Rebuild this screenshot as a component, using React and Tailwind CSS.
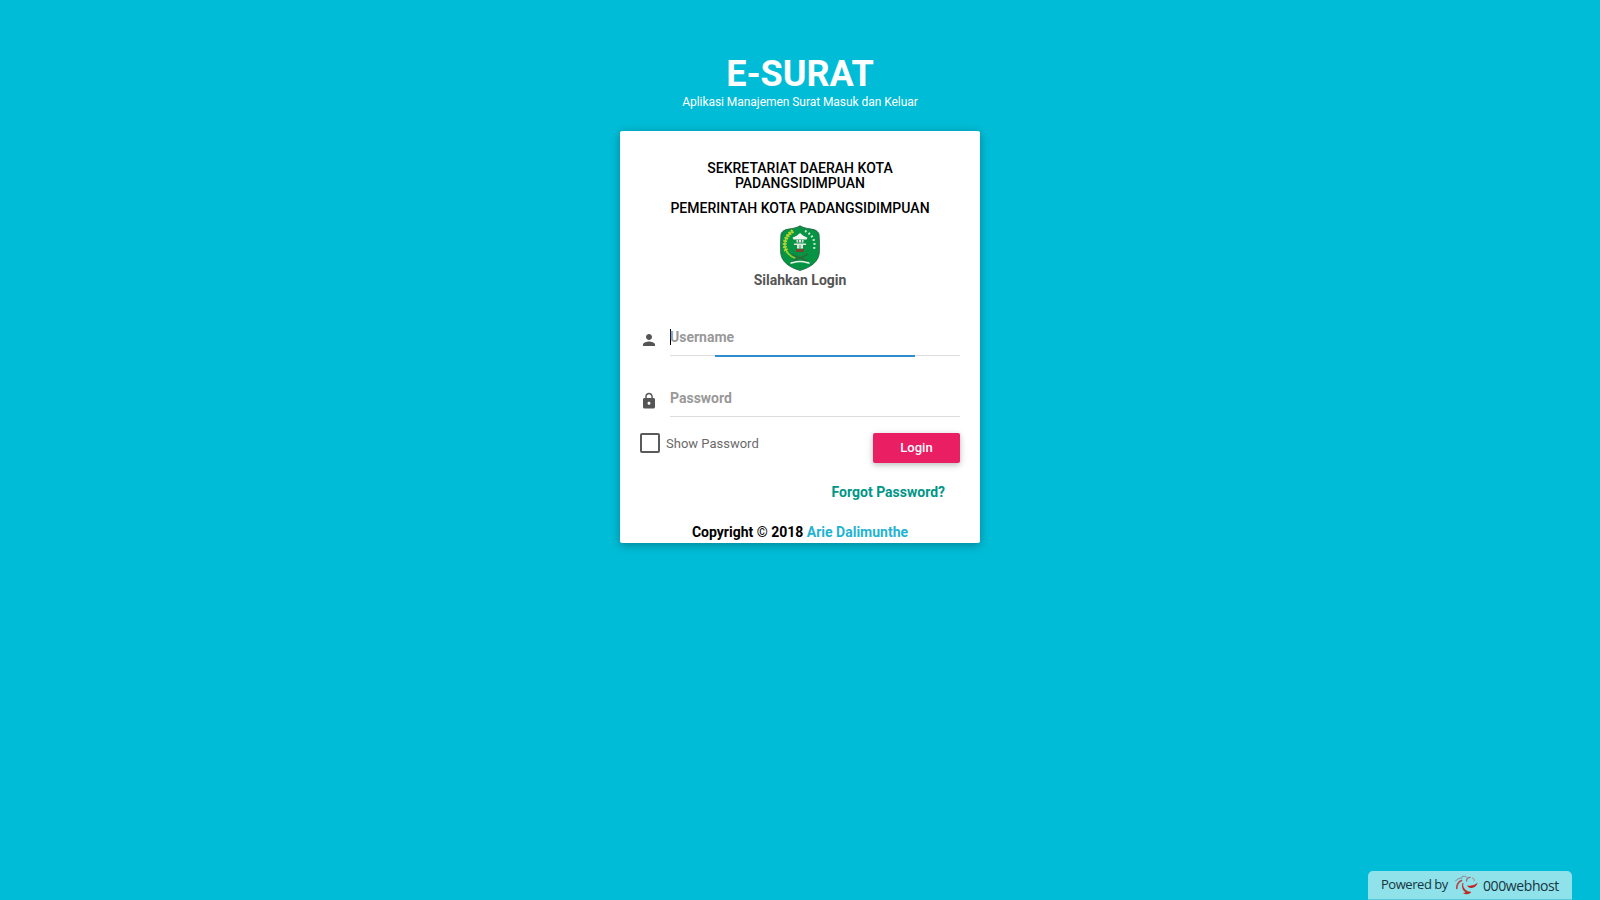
function Crest() {
  return (
    <svg className="h-[46px] w-[42px]" viewBox="0 0 42 46">
      <path d="M21 .8C24.500 3.200 30 3.600 35 4.600c2.500 1 4.200 2.400 5 4.400.5 6 .6 12 .3 19C39.500 36.500 32 42.500 21 45.400 10 42.500 2.500 36.500 1.700 28 1.400 21 1.500 15 2 9c.8-2 2.500-3.400 5-4.400C12 3.600 17.500 3.200 21 .8Z" fill="#079344" stroke="#24613f" strokeWidth=".8" />
      <path d="M14 6C6 11 3.500 20 8 27c2 3 5 5 8 6" fill="none" stroke="#9fcf2c" strokeWidth="1.600" />
      <path d="M14 6C6 11 3.500 20 8 27" fill="none" stroke="#b4d431" strokeWidth="4" strokeDasharray="1.800 1.200" />
      <path d="M26 6c7 3 11 10 9 18" fill="none" stroke="#d9f0de" strokeWidth="2.200" strokeDasharray="1.700 2.300" />
      <path d="m21 8 3 2.500 4.500 2.300-1 1.700h-13l-1-1.700L18 10.500Z" fill="#f3f7f2" />
      <path d="M17.500 15h7v2.500h-7zM15 18.500h12v1.600H15zM18 20h6v3.500h-6z" fill="#dce9dc" />
      <path d="M19.500 15v2.500m3-2.500v2.500M21 20v3.500" stroke="#286743" strokeWidth=".8" />
      <path d="M17 24h8v3h-8z" fill="#75472f" />
      <path d="M13 29c4 3 10 4 15 7M29 29c-4 3-10 4-15 7" stroke="#2d6b39" strokeWidth="1.500" fill="none" />
      <path d="M11.500 38.300c3-.8 5-1.800 9.500-1.800s6.500 1 9.500 1.800" stroke="#e8f3e8" strokeWidth="1.700" fill="none" />
    </svg>
  );
}

function HostLogo() {
  return (
    <svg className="h-5 w-6 shrink-0" viewBox="0 0 24 20">
      <path d="M9 8c-.6 3 .5 5.600 3 7.400 1.400 1 3 1.600 5 1.600-1.500 2-4.800 2.600-7.400 1.200 1-.1 1.800-.4 2.400-.8C9 15.500 7.400 12 9 8Z" fill="#c5221c" stroke="#c5221c" strokeWidth=".5" />
      <path d="M13 10.500c3.500.8 7.500-.1 10.700-3-.8 3.700-3.700 5.600-6.700 5.400-1.800-.1-3.200-1-4-2.400Z" fill="#c5221c" />
      <g fill="none" strokeLinecap="round">
        <path d="M7.500 5.500C4.500 7 2.600 10 2.800 13.500" stroke="#bb4545" strokeWidth="1.600" />
        <path d="M8 3C5.500 2.800 3 4 1.500 6" stroke="#8b7f89" strokeWidth="1" />
        <path d="M12.500 2C11 1 9.500 1 8 1.600" stroke="#8b7f89" strokeWidth=".9" />
        <path d="M12.500 6c0-2.200 1.400-3.700 3.800-3.700" stroke="#99727a" strokeWidth="1.300" />
        <path d="M18.500 3c1.500.6 2 1.600 1.700 2.800" stroke="#bd7777" strokeWidth="1" />
      </g>
    </svg>
  );
}

function Field({ label, icon, focused = false }) {
  return (
    <div className="flex h-[41px]">
      <div className="flex w-[30px] shrink-0 pt-[10px]">
        <svg className="size-[18px]" viewBox="0 0 24 24" fill="#555">
          <path d={icon} />
        </svg>
      </div>
      <div className="flex h-9 flex-1 flex-col">
        <div className="flex h-[35px] shrink-0 items-center border-b border-[#ddd] pb-[3px]">
          {focused && <span className="-mr-px h-4 w-px bg-black" />}
          <span className="text-[14px] font-bold leading-5 text-[#999]">{label}</span>
        </div>
        {focused && <div className="-mt-px ml-[44.500px] h-0.5 w-[200px] shrink-0 bg-[#2f8dcd]" />}
      </div>
    </div>
  );
}

const person = "M12 12c2.210 0 4-1.790 4-4s-1.790-4-4-4-4 1.790-4 4 1.790 4 4 4zm0 2c-2.670 0-8 1.340-8 4v2h16v-2c0-2.660-5.330-4-8-4z";
const lock = "M18 8h-1V6c0-2.760-2.240-5-5-5S7 3.240 7 6v2H6c-1.100 0-2 .9-2 2v10c0 1.100.9 2 2 2h12c1.100 0 2-.9 2-2V10c0-1.100-.9-2-2-2zm-6 9c-1.100 0-2-.9-2-2s.9-2 2-2 2 .9 2 2-.9 2-2 2zm3.100-9H8.900V6c0-1.710 1.390-3.100 3.100-3.100s3.100 1.390 3.100 3.100v2z";

export default function App() {
  return (
    <div className="flex h-screen flex-col items-center overflow-hidden bg-[#00bcd6] font-[Roboto,sans-serif] text-[14px]">
      <header className="h-[131px] shrink-0 pt-[49px] text-center text-white">
        <h1 className="text-[36px] font-bold leading-[51px]">E-SURAT</h1>
        <p className="-mt-[6px] text-[12px] leading-[17px] tracking-[-0.05px]">Aplikasi Manajemen Surat Masuk dan Keluar</p>
      </header>
      <main className="flex h-[412px] w-[360px] shrink-0 flex-col rounded-[2px] bg-white px-5 pt-[30px] shadow-[0_2px_10px_rgba(0,0,0,0.3)]">
        <div className="flex flex-col items-center text-center font-medium leading-[15px] text-black">
          <p className="w-[300px] tracking-[0.02px]">SEKRETARIAT DAERAH KOTA PADANGSIDIMPUAN</p>
          <p className="mt-[10px] tracking-[0.02px]">PEMERINTAH KOTA PADANGSIDIMPUAN</p>
          <div className="mt-[9px]"><Crest /></div>
          <p className="-mt-px leading-5 font-bold text-[#555]">Silahkan Login</p>
        </div>
        <div className="mt-[31px]"><Field label="Username" icon={person} focused /></div>
        <div className="mt-5"><Field label="Password" icon={lock} /></div>
        <div className="mt-[10px] flex h-[30px] justify-between">
          <div className="flex h-5 items-center gap-[6px]">
            <span className="size-5 rounded-[2px] border-2 border-[#5a5a5a]" />
            <span className="pt-0.5 text-[13px] leading-5 text-[#6a6a6a]">Show Password</span>
          </div>
          <button className="h-[30px] w-[87px] rounded-[2px] bg-[#e91e63] text-[13px] font-medium text-white shadow-[0_2px_5px_rgba(0,0,0,0.16),0_2px_10px_rgba(0,0,0,0.12)]">Login</button>
        </div>
        <a className="mt-[19px] mr-[15px] self-end font-bold leading-5 text-[#009688]">Forgot Password?</a>
        <p className="mt-5 text-center font-bold leading-5 text-black">
          Copyright <span className="font-normal">©</span> 2018 <a className="text-[#1fb3d3]">Arie Dalimunthe</a>
        </p>
      </main>
      <footer className="mt-auto mr-7 flex h-[29px] w-[204px] shrink-0 items-center self-end rounded-t-[5px] border-b border-[#55c9d9] bg-[#8fe1ea] pl-[13px] font-['Open_Sans',sans-serif] text-[13px] text-[#17353d]">
        <span className="w-[73px] whitespace-nowrap tracking-[-0.45px]">Powered by</span>
        <HostLogo />
        <span className="ml-[5px] whitespace-nowrap text-[14px] font-medium tracking-[-0.4px]">000webhost</span>
      </footer>
    </div>
  );
}
